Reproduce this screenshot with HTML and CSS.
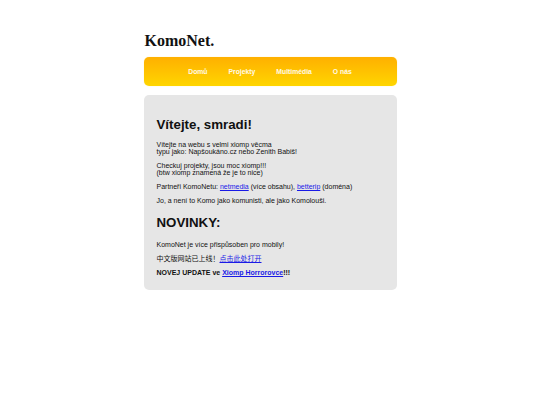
FILE: index.html
```html
<!DOCTYPE html>
<html lang="cs">
<head>
<meta charset="utf-8">
<title>KomoNet.</title>
<link rel="stylesheet" href="styles.css">
</head>
<body>
<div class="page">
  <header class="site-title">KomoNet.</header>
  <nav class="nav">
    <a href="#">Domů</a>
    <a href="#">Projekty</a>
    <a href="#">Multimédia</a>
    <a href="#">O nás</a>
  </nav>
  <main class="content">
    <h1>Vítejte, smradi!</h1>
    <p>Vítejte na webu s velmi xiomp věcma<br>typu jako: Napšoukáno.cz nebo Zenith Babiš!</p>
    <p>Checkuj projekty, jsou moc xiomp!!!<br>(btw xiomp znamená že je to nice)</p>
    <p>Partneři KomoNetu: <a href="#">netmedia</a> (více obsahu), <a href="#">betterip</a> (doména)</p>
    <p>Jo, a není to Komo jako komunisti, ale jako Komolouši.</p>
    <h2>NOVINKY:</h2>
    <p>KomoNet je více přispůsoben pro mobily!</p>
    <p class="cjk">中文版网站已上线！<a href="#">点击此处打开</a></p>
    <p class="strong">NOVEJ UPDATE ve <a href="#">Xiomp Horrorovce</a>!!!</p>
  </main>
</div>
</body>
</html>
```

FILE: styles.css
```css
html, body {
  margin: 0;
  padding: 0;
  background: #ffffff;
}

.page {
  width: 253px;
  margin: 0 auto;
  padding-top: 32px;
  font-family: "Liberation Sans", Arial, "Noto Sans CJK SC", sans-serif;
  color: #111111;
}

.site-title {
  font-family: "Liberation Serif", "Times New Roman", serif;
  font-weight: bold;
  font-size: 16px;
  line-height: 18px;
  margin: 0 0 7px 1px;
  color: #111111;
}

.nav {
  height: 29px;
  display: flex;
  justify-content: center;
  align-items: center;
  gap: 21px;
  border-radius: 5px;
  background: linear-gradient(to bottom, #ffb000 0%, #ffc400 55%, #ffd600 100%);
  box-shadow: 0 0 1px rgba(255, 214, 60, 0.6);
}

.nav a {
  color: #fffbe8;
  text-decoration: none;
  font-weight: bold;
  font-size: 6.8px;
  line-height: 8px;
}

.content {
  margin-top: 9px;
  background: #e6e6e6;
  border-radius: 5px;
  padding: 13px 13px 7px 13px;
}

.content h1 {
  font-size: 13.3px;
  line-height: 15px;
  margin: 9px 0;
  font-weight: bold;
}

.content h2 {
  font-size: 13.3px;
  line-height: 15px;
  margin: 11px 0;
  font-weight: bold;
}

.content p {
  font-size: 7px;
  line-height: 7px;
  margin: 7px 0;
}

.content a {
  color: #1a1ae6;
  text-decoration: underline;
}

.content .cjk {
  font-family: "Noto Sans CJK SC", "Liberation Sans", sans-serif;
}

.content .strong {
  font-weight: bold;
}
```
